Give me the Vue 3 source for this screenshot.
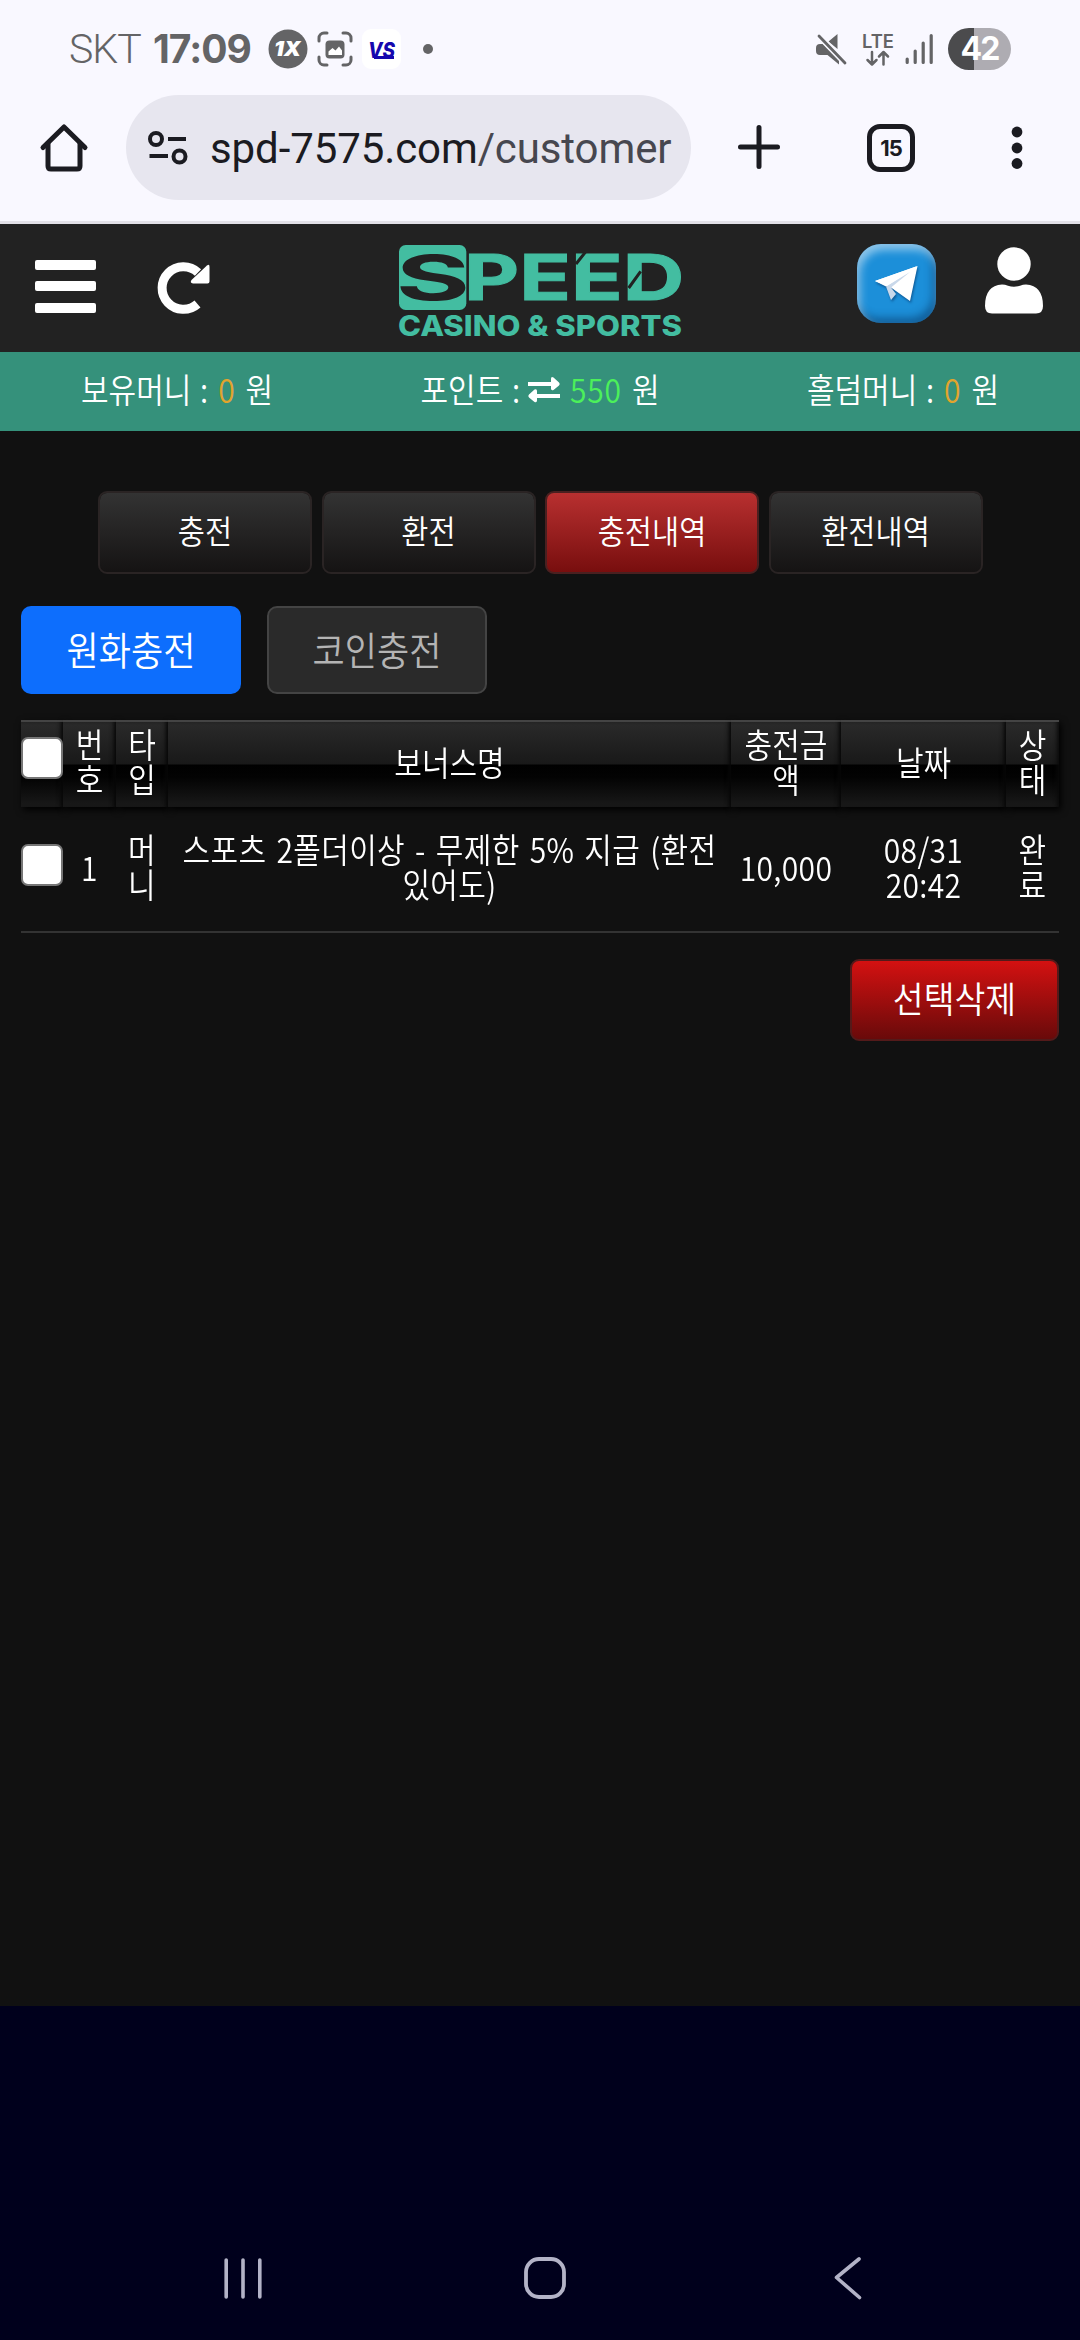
<script setup>
const balances = [
  { label: '보유머니 :', value: '0', swap: false },
  { label: '포인트 :', value: '550', swap: true },
  { label: '홀덤머니 :', value: '0', swap: false },
]
const tabs = ['충전', '환전', '충전내역', '환전내역']
const activeTab = 2
const columns = [
  { width: 42, title: '' },
  { width: 53, title: '번\n호' },
  { width: 52, title: '타\n입' },
  { width: 563, title: '보너스명' },
  { width: 110, title: '충전금\n액' },
  { width: 165, title: '날짜' },
  { width: 53, title: '상\n태' },
]
const rows = [
  ['1', '머\n니', '스포츠 2폴더이상 - 무제한 5% 지급 (환전\n있어도)', '10,000', '08/31\n20:42', '완\n료'],
]
</script>

<template>
  <div class="screen">
    <div class="status">
      <span class="carrier">SKT</span>
      <span class="clock">17:09</span>
      <svg class="s-1x" width="40" height="40" viewBox="0 0 40 40">
        <circle cx="20" cy="20" r="19.5" fill="#646466" />
        <text x="6" y="27" font-family="Inter" font-weight="900" font-style="italic" font-size="20" fill="#fff" textLength="27" lengthAdjust="spacingAndGlyphs">1X</text>
      </svg>
      <svg class="s-shot" width="36" height="36" viewBox="0 0 36 36" fill="none" stroke="#646466" stroke-width="3" stroke-linecap="round">
        <path d="M2 10V7a5 5 0 0 1 5-5h3M26 2h3a5 5 0 0 1 5 5v3M34 26v3a5 5 0 0 1-5 5h-3M10 34H7a5 5 0 0 1-5-5v-3" />
        <rect x="8.500" y="9.500" width="19" height="18" rx="4" fill="#646466" stroke="none" />
        <path d="M11.500 24v-3.500l4-3.500 3 2.500 3.500-4 3 4V24z" fill="#fff" stroke="none" />
      </svg>
      <svg class="s-vs" width="39" height="40" viewBox="0 0 39 40">
        <rect width="39" height="40" rx="9" fill="#fff" />
        <text x="6" y="29" font-family="Inter" font-weight="800" font-style="italic" font-size="22" fill="#1507ae" textLength="27" lengthAdjust="spacingAndGlyphs">VS</text>
        <path d="M12 28.500h20" stroke="#1507ae" stroke-width="3" />
      </svg>
      <i class="s-dot"></i>
      <span class="grow"></span>
      <svg class="s-mute" width="30" height="32" viewBox="0 0 30 32">
        <path d="M4 11h3l16 16v4.500L11.500 22H4q-4 0-4-4v-3q0-4 4-4zM12.500 8.500L21.500 1v15z" fill="#646466" />
        <path d="M3 3l26 27" stroke="#f9f8ff" stroke-width="6" />
        <path d="M3 3l26 27" stroke="#646466" stroke-width="2.800" stroke-linecap="round" />
      </svg>
      <svg class="lte" width="34" height="34" viewBox="0 0 34 34">
        <text x="1" y="15" font-family="Inter" font-weight="600" font-size="19" fill="#646466" textLength="32" lengthAdjust="spacingAndGlyphs">LTE</text>
        <path d="M11 19v12M6.500 27l4.500 4.500 4.500-4.500M22.500 31.500v-12M18 23.500l4.500-4.500 4.500 4.500" fill="none" stroke="#646466" stroke-width="2.500" stroke-linecap="round" stroke-linejoin="round" />
      </svg>
      <svg class="s-sig" width="30" height="32" viewBox="0 0 30 32" stroke="#646466" stroke-width="3.200" stroke-linecap="round">
        <path d="M2.200 26v3.500M10.200 18v11.500M18.200 10v19.500M26.200 2.500v27" />
      </svg>
      <div class="battery">42</div>
    </div>

    <div class="toolbar">
      <svg class="home" width="48" height="48" viewBox="0 0 48 48" fill="none" stroke="#1b1b21" stroke-width="5" stroke-linejoin="round" stroke-linecap="round">
        <path d="M3 23.500L24 3l21 20.500" />
        <path d="M8 20v22q0 3 3 3h26q3 0 3-3V20" />
      </svg>
      <div class="pill">
        <svg width="40" height="34" viewBox="0 0 40 34" fill="none" stroke="#1b1b21" stroke-width="4">
          <circle cx="8" cy="8" r="6" /><path d="M20 8h18M1.500 25h18.500" /><circle cx="31.500" cy="25.500" r="6" />
        </svg>
        <span class="url">spd-7575.com<em>/customer</em></span>
      </div>
      <svg class="plus" width="42" height="44" viewBox="0 0 42 44" stroke="#1b1b21" stroke-width="5" stroke-linecap="round">
        <path d="M21 2.500v39M2.500 22h37" />
      </svg>
      <div class="count">15</div>
      <svg class="more" width="12" height="44" viewBox="0 0 12 44" fill="#1b1b21">
        <circle cx="6" cy="6" r="5.400" /><circle cx="6" cy="22" r="5.400" /><circle cx="6" cy="37.500" r="5.400" />
      </svg>
    </div>

    <header class="site">
      <svg class="burger" width="61" height="53" viewBox="0 0 61 53" fill="#fff">
        <rect width="61" height="10" rx="2" /><rect y="21" width="61" height="10" rx="2" /><rect y="43" width="61" height="10" rx="2" />
      </svg>
      <svg class="reload" width="53" height="52" viewBox="0 0 53 52">
        <path d="M39.500 42A21.300 21.300 0 1 1 40 10.500" fill="none" stroke="#fff" stroke-width="9" />
        <path d="M49 3.500q2.500-2 2.500 1.500v14.500q0 2-2 2H35q-3.500-1-1.500-3.500z" fill="#fff" />
      </svg>
      <svg class="logo" width="283" height="94" viewBox="57 72 849 282">
        <rect x="57" y="75" width="202" height="195" rx="20" fill="#43bda1" />
        <text x="47" y="240" font-family="Inter" font-weight="700" font-size="186" fill="#222" textLength="223" lengthAdjust="spacingAndGlyphs">S</text>
        <text x="252" y="239" font-family="Inter" font-weight="700" font-size="191" fill="#43bda1" stroke="#43bda1" stroke-width="3" textLength="661" lengthAdjust="spacingAndGlyphs">PEED</text>
        <path d="M618 94l-30 38M746 204l36-50" stroke="#222" stroke-width="9" />
        <text x="54" y="349" font-family="Inter" font-weight="800" font-size="86" fill="#43bda1" textLength="852" lengthAdjust="spacingAndGlyphs">CASINO &amp; SPORTS</text>
      </svg>
      <div class="telegram">
        <svg width="46" height="38" viewBox="0 0 46 38">
          <path d="M1 16L43.500 1 36 36 17 22.500z" fill="#fff" />
          <path d="M1 16l11 5.500L36 7 17 22.500l5 6.500-5 6-5-13.500z" fill="#c9d8ea" />
          <path d="M1 16L43.500 1 12 21.500z" fill="#fff" />
        </svg>
      </div>
      <svg class="user" width="58" height="67" viewBox="0 0 58 67" fill="#fff">
        <circle cx="29" cy="17" r="16.700" />
        <path d="M17 37.500q3 0 6 1.200 6 2 12 0 3-1.200 6-1.200 17 1 17 21.500 0 7.500-7 7.500H7q-7 0-7-7.500Q0 38.500 17 37.500z" />
      </svg>
    </header>

    <div class="balances">
      <div v-for="b in balances" :key="b.label" class="balance">
        <span>{{ b.label }}</span>
        <svg v-if="b.swap" width="32" height="26" viewBox="0 0 32 26" fill="#fff">
          <path d="M0 5h23V2q0-3 2.500-1.500L31 5.500q1.500 1.500 0 3L25.500 13Q23 14 23 11.500V9H0zM32 17H9v-3q0-2.500-2.500-1.500L1 17.500q-1.500 1.500 0 3L6.500 25Q9 26 9 23.500V21h23z" />
        </svg>
        <b :class="{ green: b.swap }">{{ b.value }}</b>
        <span>원</span>
      </div>
    </div>

    <main>
      <nav class="tabs">
        <button v-for="(t, i) in tabs" :key="t" :class="{ active: i === activeTab }"><span>{{ t }}</span></button>
      </nav>
      <div class="kinds">
        <button class="won"><span>원화충전</span></button>
        <button class="coin"><span>코인충전</span></button>
      </div>
      <table>
        <colgroup><col v-for="(c, i) in columns" :key="i" :style="{ width: c.width + 'px' }" /></colgroup>
        <thead>
          <tr>
            <th v-for="(c, i) in columns" :key="i">
              <i v-if="i === 0" class="check"></i>
              <span v-else class="cell">{{ c.title }}</span>
            </th>
          </tr>
        </thead>
        <tbody>
          <tr v-for="(r, i) in rows" :key="i">
            <td><i class="check"></i></td>
            <td v-for="(cell, j) in r" :key="j"><span class="cell">{{ cell }}</span></td>
          </tr>
        </tbody>
      </table>
      <div class="actions"><button class="delete"><span>선택삭제</span></button></div>
    </main>

    <footer>
      <svg width="38" height="42" viewBox="0 0 38 42" stroke="#b3b3c7" stroke-width="3.600" stroke-linecap="round"><path d="M2.200 3v37M19 3v37M35.800 3v37" /></svg>
      <svg width="42" height="42" viewBox="0 0 42 42" fill="none" stroke="#b3b3c7" stroke-width="3.800"><rect x="2" y="2" width="38" height="38" rx="13" /></svg>
      <svg width="28" height="42" viewBox="0 0 28 42" fill="none" stroke="#b3b3c7" stroke-width="3.600" stroke-linecap="round" stroke-linejoin="round"><path d="M25 2L2.500 20.500 25.500 40.500" /></svg>
    </footer>
  </div>
</template>

<style>
body { margin: 0; background: #00001c; }
</style>

<style scoped>
.screen {
  width: 1080px; height: 2340px; overflow: hidden; display: flex; flex-direction: column;
  background: #00001c; font-family: "Noto Sans CJK KR", sans-serif; font-weight: 350; color: #fff;
}
svg { display: block; flex: none; overflow: visible; }
button { font: inherit; color: inherit; padding: 0; margin: 0; box-sizing: border-box; }
.grow { flex: 1; }

.status { height: 95px; background: #f9f8ff; display: flex; align-items: flex-start; padding: 0 69px 0 69px; color: #646466; font-family: Roboto, sans-serif; }
.carrier { width: 84px; font-size: 41px; line-height: 48px; margin-top: 25px; font-weight: 300; letter-spacing: -1px; white-space: nowrap; }
.clock { width: 115px; font-family: Inter, sans-serif; font-size: 39px; line-height: 48px; margin-top: 25px; font-weight: 700; letter-spacing: -1px; }
.s-1x { margin-top: 29px; }
.s-shot { margin: 31px 0 0 9px; }
.s-vs { margin: 29px 0 0 9px; }
.s-dot { width: 10px; height: 10px; border-radius: 50%; background: #646466; margin: 44px 0 0 22px; }
.s-mute { margin-top: 33px; }
.lte { margin: 33px 0 0 15px; }
.s-sig { margin: 33px 0 0 10px; }
.battery {
  width: 63px; height: 42px; margin: 28px 0 0 13px; border-radius: 21px; text-align: center;
  background: linear-gradient(90deg, #4b4b4d 41%, #aeacb2 41%); color: #fff;
  font: 700 32px/42px Inter, sans-serif; letter-spacing: -2px;
}

.toolbar { height: 126px; background: #f9f8ff; border-bottom: 3px solid #e2e1e8; display: flex; align-items: flex-start; padding-left: 40px; }
.home { margin-top: 29px; }
.pill { width: 565px; height: 105px; box-sizing: border-box; border-radius: 53px; background: #e7e6ef; margin-left: 38px; padding-left: 22px; display: flex; align-items: center; }
.url { margin: 2px 0 0 22px; font: 400 42px/50px Roboto, sans-serif; letter-spacing: -.1px; color: #1b1b21; white-space: nowrap; }
.url em { font-style: normal; color: #47474f; }
.plus { margin: 30px 0 0 47px; }
.count { width: 48px; height: 48px; box-sizing: border-box; border: 5px solid #1b1b21; border-radius: 13px; margin: 29px 0 0 87px; text-align: center; font: 700 22px/38px Inter, sans-serif; color: #1b1b21; letter-spacing: -1px; }
.more { margin: 31px 0 0 96px; }

.site { height: 128px; background: #222; display: flex; align-items: flex-start; padding-left: 35px; }
.burger { margin-top: 36px; }
.reload { margin: 38px 0 0 62px; }
.logo { margin: 20px 0 0 188px; }
.telegram {
  width: 79px; height: 79px; margin: 20px 0 0 175px; border-radius: 24px; background: #1c8fd9;
  display: flex; align-items: center; justify-content: center;
  box-shadow: inset 3px 6px 9px rgba(255, 255, 255, .5), inset -3px -5px 9px rgba(0, 30, 70, .45);
}
.telegram svg { filter: drop-shadow(1px 2px 1px rgba(0, 40, 90, .5)); }
.user { margin: 23px 0 0 49px; }

.balances { height: 79px; background: #35917b; display: flex; justify-content: space-between; padding: 0 81px; font-size: 30px; }
.balance { display: flex; align-items: center; gap: 10px; white-space: nowrap; word-spacing: 2px; }
.balance svg { margin: -3px 0 0 -2px; }
.balance span, .balance b { line-height: 76px; height: 79px; transform: translateY(-1px) scaleY(1.12); }
.balance b { font-weight: 350; color: #e2a42c; letter-spacing: .8px; }
.balance b.green { color: #4cf05a; }

main { height: 1575px; background: #111; box-sizing: border-box; padding: 60px 21px 0; }
.tabs { display: flex; gap: 9.5px; padding-left: 77px; }
.tabs button { width: 214px; height: 83px; border: 2px solid #2a2424; border-radius: 9px; background: linear-gradient(#333, #151313); background-clip: padding-box; font-size: 29.5px; }
.tabs button.active { background: linear-gradient(#b83030, #780e0e); background-clip: border-box; border-color: #4a2020; }
button span { display: block; transform: translateY(-3px) scaleY(1.1); white-space: nowrap; }
.kinds { display: flex; gap: 26px; margin-top: 32px; }
.kinds button { width: 220px; height: 88px; border-radius: 10px; font-size: 35px; }
.kinds .won { border: none; background: #0d6efd; }
.kinds .coin { border: 2px solid #444; background: #2a2a2a; color: #b4b4b4; }

table { width: 1038px; margin-top: 26px; table-layout: fixed; border-collapse: separate; border-spacing: 0; }
th, td { padding: 0; text-align: center; vertical-align: middle; font-size: 30px; font-weight: 350; }
th {
  height: 79px; padding-bottom: 6px; border-top: 2px solid #444;
  background: linear-gradient(#2a2a2a, #191919 49%, #000 51%, #030303 65%, #1a1a1a);
  box-shadow: inset -4px 0 4px -2px #0a0a0a, 2px 3px 7px #000;
}
td { height: 118px; padding-bottom: 6px; border-bottom: 2px solid #333; }
.cell { display: block; line-height: 32.2px; transform: scaleY(1.12); white-space: pre; word-spacing: 3px; }
td .cell { letter-spacing: .35px; }
.check { display: block; box-sizing: border-box; width: 42px; height: 42px; border: 2.5px solid #767676; border-radius: 7px; background: #fff; position: relative; top: -4px; }
td .check { top: -1px; }

.actions { display: flex; justify-content: flex-end; margin-top: 26px; }
.delete { width: 209px; height: 82px; border: 2px solid #541a1a; border-radius: 9px; background: linear-gradient(#d41111, #690a0a); font-size: 33.500px; }

footer { flex: 1; display: flex; align-items: flex-end; padding: 0 0 41px 224px; }
footer svg + svg { margin-left: 262px; }
footer svg:last-child { margin-left: 268px; }
</style>
